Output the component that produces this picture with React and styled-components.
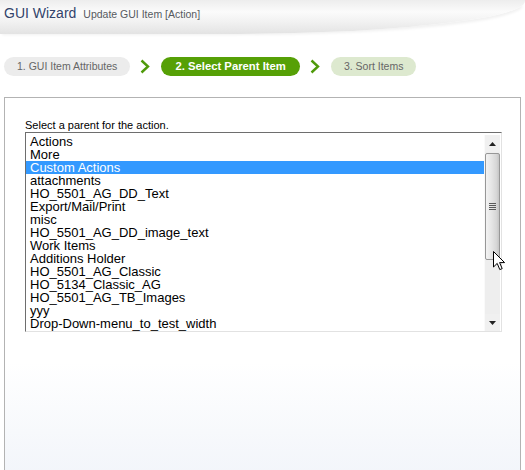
import styled, { createGlobalStyle } from "styled-components";

const GlobalStyle = createGlobalStyle`
  html, body {
    margin: 0;
    padding: 0;
    overflow: hidden;
    background: #fff;
    font-family: "Liberation Sans", Arial, sans-serif;
  }
`;

const items = [
  "Actions",
  "More",
  "Custom Actions",
  "attachments",
  "HO_5501_AG_DD_Text",
  "Export/Mail/Print",
  "misc",
  "HO_5501_AG_DD_image_text",
  "Work Items",
  "Additions Holder",
  "HO_5501_AG_Classic",
  "HO_5134_Classic_AG",
  "HO_5501_AG_TB_Images",
  "yyy",
  "Drop-Down-menu_to_test_width",
];

const steps = [
  { label: "1. GUI Item Attributes", state: "done" },
  { label: "2. Select Parent Item", state: "active" },
  { label: "3. Sort Items", state: "next" },
];

export default function App() {
  const selected = "Custom Actions";

  return (
    <Page>
      <GlobalStyle />
      <Header>
        <Title>GUI Wizard</Title>
        <Subtitle>Update GUI Item [Action]</Subtitle>
      </Header>

      <Steps>
        {steps.map((s, i) => (
          <StepGroup key={s.label}>
            {i > 0 && (
              <Chevron viewBox="0 0 10 15">
                <polyline points="1.5,1.5 8,7.5 1.5,13.5" />
              </Chevron>
            )}
            <Pill $state={s.state}>{s.label}</Pill>
          </StepGroup>
        ))}
      </Steps>

      <Panel>
        <FieldLabel>Select a parent for the action.</FieldLabel>
        <ListBox>
          <List>
            {items.map((it) => (
              <Option key={it} $selected={it === selected}>
                {it}
              </Option>
            ))}
          </List>
          <ScrollBar>
            <ScrollButton>
              <Tri viewBox="0 0 7 4">
                <polygon points="0,4 3.5,0 7,4" />
              </Tri>
            </ScrollButton>
            <Thumb>
              <Grip>
                <span />
                <span />
                <span />
                <span />
              </Grip>
            </Thumb>
            <Track />
            <ScrollButton>
              <Tri viewBox="0 0 7 4">
                <polygon points="0,0 3.5,4 7,0" />
              </Tri>
            </ScrollButton>
          </ScrollBar>
          <Cursor viewBox="0 0 13 20">
            <path
              d="M0.5,0.5 L0.5,16 L4.2,12.4 L6.8,18.6 L9.2,17.6 L6.6,11.6 L11.6,11.6 Z"
              fill="#fff"
              stroke="#000"
              strokeWidth="1"
              strokeLinejoin="miter"
            />
          </Cursor>
        </ListBox>
      </Panel>
    </Page>
  );
}

const Page = styled.div`
  width: 525px;
  height: 470px;
  overflow: hidden;
`;

const Header = styled.div`
  height: 34px;
  display: flex;
  align-items: baseline;
  gap: 7px;
  padding: 5px 0 0 4px;
  box-sizing: border-box;
  background: linear-gradient(180deg, #ededed 0%, #fbfbfb 35%, #f1f1f1 65%, #e3e3e3 100%);
  border-bottom-right-radius: 58% 33px;
  box-shadow: 0 3px 3px -2px rgba(0, 0, 0, 0.06);
`;

const Title = styled.span`
  font-size: 14px;
  line-height: 16px;
  color: #33446b;
`;

const Subtitle = styled.span`
  font-size: 10.5px;
  line-height: 16px;
  color: #565a60;
`;

const Steps = styled.div`
  display: flex;
  align-items: center;
  padding: 23px 0 0 4px;
`;

const StepGroup = styled.div`
  display: flex;
  align-items: center;
`;

const Chevron = styled.svg`
  width: 10px;
  height: 15px;
  margin: 0 11px 0 10px;
  fill: none;
  stroke: #4f9a0a;
  stroke-width: 2.4;
`;

const Pill = styled.div`
  height: 19px;
  line-height: 19px;
  border-radius: 10px;
  white-space: nowrap;
  padding: 0 ${(p) => (p.$state === "active" ? "14px" : "13px")};
  font-size: ${(p) => (p.$state === "active" ? "11.3px" : "10.5px")};
  font-weight: ${(p) => (p.$state === "active" ? "bold" : "normal")};
  color: ${(p) => (p.$state === "active" ? "#fff" : "#666")};
  background: ${(p) =>
    p.$state === "active" ? "#56a006" : p.$state === "next" ? "#dde9cf" : "#ececec"};
`;

const Panel = styled.div`
  margin: 21px 4px 0 4px;
  min-height: 380px;
  box-sizing: border-box;
  border: 1px solid #b3b3b3;
  padding: 21px 0 0 20px;
  background: linear-gradient(180deg, #ffffff 0%, #ffffff 70%, #f2f5fa 100%);
`;

const FieldLabel = styled.div`
  font-size: 11px;
  line-height: 13px;
  color: #000;
`;

const ListBox = styled.div`
  position: relative;
  width: 477px;
  height: 200px;
  box-sizing: border-box;
  display: flex;
  padding: 2px 1px 0 0;
  background: #fff;
  border-top: 1px solid #6e6e6e;
  border-left: 1px solid #6e6e6e;
  border-right: 1px solid #e2e2e2;
  border-bottom: 1px solid #e2e2e2;
`;

const List = styled.div`
  flex: 1;
  overflow: hidden;
`;

const Option = styled.div`
  height: 13px;
  line-height: 13px;
  padding-left: 4px;
  font-size: 13px;
  white-space: nowrap;
  color: ${(p) => (p.$selected ? "#fff" : "#000")};
  background: ${(p) => (p.$selected ? "#3399ff" : "transparent")};
`;

const ScrollBar = styled.div`
  width: 16px;
  display: flex;
  flex-direction: column;
  background: #eeeeee;
  border-left: 1px solid #fafafa;
  box-sizing: border-box;
`;

const ScrollButton = styled.div`
  height: 17px;
  display: flex;
  align-items: center;
  justify-content: center;
  background: #f0f0f0;
`;

const Tri = styled.svg`
  width: 7px;
  height: 4px;
  fill: #222;
`;

const Thumb = styled.div`
  height: 107px;
  margin: 1px 0 0 0;
  box-sizing: border-box;
  border: 1px solid #979797;
  border-radius: 2px;
  background: linear-gradient(90deg, #f3f3f3 0%, #e6e6e6 40%, #d6d6d6 80%, #c4c4c4 100%);
  display: flex;
  align-items: center;
  justify-content: center;
`;

const Grip = styled.div`
  display: flex;
  flex-direction: column;
  gap: 1px;

  span {
    display: block;
    width: 7px;
    height: 1px;
    background: #5a5a5a;
  }
`;

const Track = styled.div`
  flex: 1;
`;

const Cursor = styled.svg`
  position: absolute;
  left: 467px;
  top: 118px;
  width: 13px;
  height: 20px;
`;
